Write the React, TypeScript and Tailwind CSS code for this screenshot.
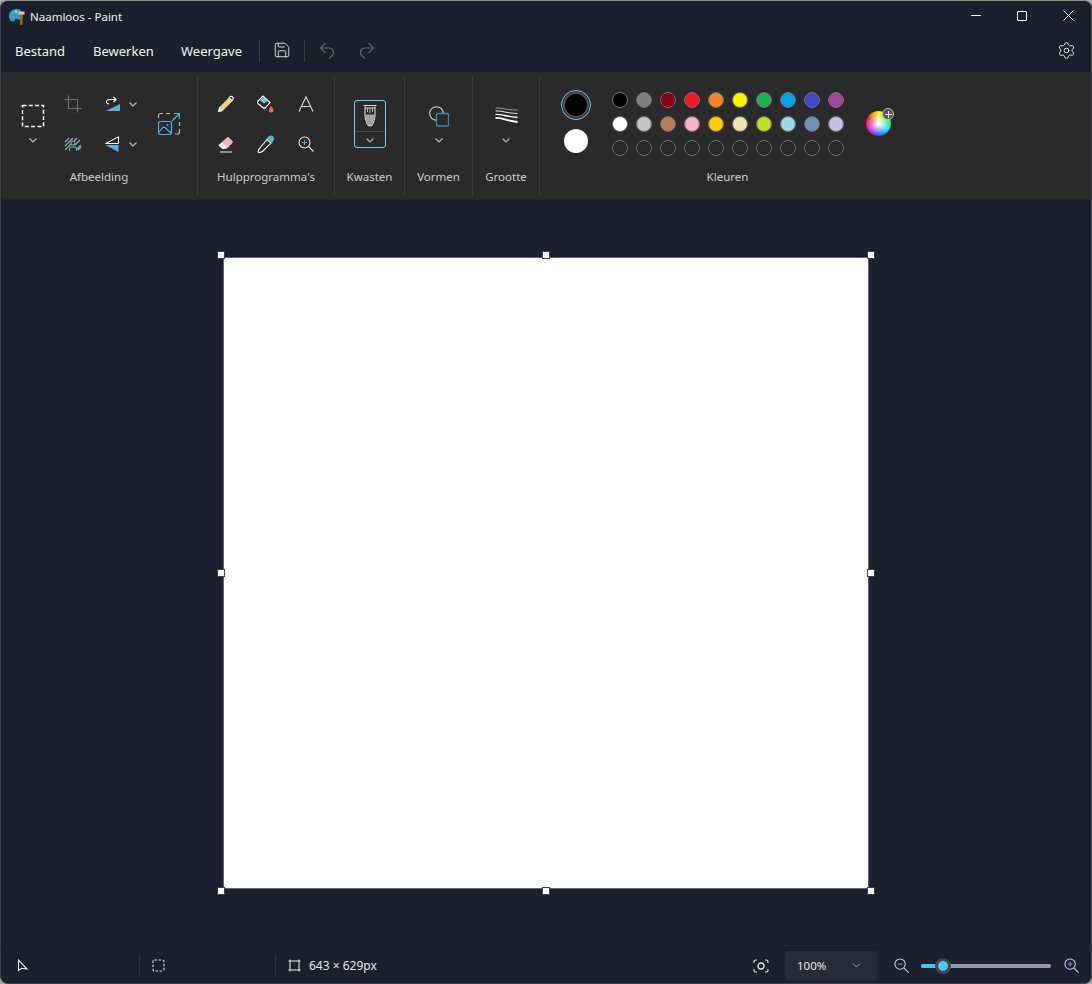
import { ChevronDown, Save, Settings } from "lucide-react";

const row1 = ["bg-[#000000]", "bg-[#7f7f7f]", "bg-[#880015]", "bg-[#ed1c24]", "bg-[#ff7f27]", "bg-[#fff200]", "bg-[#22b14c]", "bg-[#00a2e8]", "bg-[#3f48cc]", "bg-[#a349a4]"];
const row2 = ["bg-[#ffffff]", "bg-[#c3c3c3]", "bg-[#b97a57]", "bg-[#ffaec9]", "bg-[#ffc90e]", "bg-[#efe4b0]", "bg-[#b5e61d]", "bg-[#99d9ea]", "bg-[#7092be]", "bg-[#c8bfe7]"];
const row3 = Array.from({ length: 10 }, () => "bg-transparent");

const BLUE = "#4fb3e3";

function Chevron() {
  return (
    <svg width="10" height="10" viewBox="0 0 10 10" fill="none" stroke="#b4b4b4" strokeWidth="1.2">
      <path d="M1.5 3.5 5 7l3.5-3.5" />
    </svg>
  );
}

function Cell({ children, w = "w-10" }: { children: React.ReactNode; w?: string }) {
  return <div className={`${w} h-10 flex items-center justify-center shrink-0`}>{children}</div>;
}

function Group({ label, width, children }: { label: string; width: string; children: React.ReactNode }) {
  return (
    <div className={`${width} h-full shrink-0 flex flex-col border-r border-[#3c3c3c]`}>
      <div className="h-[88px] pt-2 flex">{children}</div>
      <div className="h-[26px] flex items-center justify-center text-[11.5px] text-[#cdcdcd]">{label}</div>
    </div>
  );
}

function Stacked({ icon, width = "w-full" }: { icon: React.ReactNode; width?: string }) {
  return (
    <div className={`${width} flex flex-col items-center pt-5`}>
      <div className="h-6 flex items-center justify-center">{icon}</div>
      <div className="mt-[7px]">
        <Chevron />
      </div>
    </div>
  );
}

function PaintLogo() {
  return (
    <svg width="16" height="17" viewBox="0 0 16 17">
      <path d="M7.500 1C3 1 0 4 0 8.500c0 3.500 2.500 5.500 4.500 5 1.500-.4 1-2.500 2.500-2.700 1.500-.2 3 2.200 5.500.2 2.500-2 2-10-5-10z" fill="#2a9be0" />
      <circle cx="3" cy="9" r="1.300" fill="#ef5b3c" />
      <circle cx="7" cy="3.500" r="1.300" fill="#ffd23f" />
      <circle cx="3.500" cy="5" r="1.300" fill="#35c2a0" />
      <path d="M11 6h2.500v11H11z" fill="#a85a28" />
      <path d="M9.500 3.500h6V6.500h-6z" fill="#eec48c" />
    </svg>
  );
}

function SelectIcon() {
  return (
    <svg width="24" height="24" viewBox="0 0 24 24" fill="none" stroke="#fff" strokeWidth="1.500">
      <rect x="1.500" y="1.500" width="21" height="21" strokeDasharray="4 2.300" />
    </svg>
  );
}

function CropIcon() {
  return (
    <svg width="18" height="18" viewBox="0 0 18 18" fill="none" stroke="#6f6f6f" strokeWidth="1.200">
      <path d="M4.500 0.500v13h13M0.500 4.500h13v13" />
    </svg>
  );
}

function RotateIcon() {
  return (
    <svg width="16" height="16" viewBox="0 0 16 16" fill="none">
      <path d="M2 15 16 8v7z" fill={BLUE} />
      <path d="M5 8C1.500 7.500 1.500 3.500 5.500 3.500H12M9.500 1 12 3.500 9.500 6" stroke="#fff" strokeWidth="1.100" />
    </svg>
  );
}

function FlipIcon() {
  return (
    <svg width="16" height="17" viewBox="0 0 16 17" fill="none">
      <path d="M1.500 7.500 14.500.8v6.700z" stroke="#fff" strokeWidth="1" />
      <path d="M1.500 9h13v7z" fill={BLUE} />
    </svg>
  );
}

function RemoveBgIcon() {
  return (
    <svg width="18" height="16" viewBox="0 0 18 16" fill="none">
      <path d="M1 6 5 2M1 10l8-8M1 14 13 2M6 14l2-2M11 9l5-5M12 14l5-5M14 14l3-3" stroke="#a8a8a8" strokeWidth="1.100" />
      <circle cx="9" cy="7" r="2" fill="#2a2a2a" stroke={BLUE} strokeWidth="1.100" />
      <path d="M5.500 15v-2a2 2 0 0 1 2-2h3a2 2 0 0 1 2 2v2" fill="#2a2a2a" stroke={BLUE} strokeWidth="1.100" />
    </svg>
  );
}

function ResizeIcon() {
  return (
    <svg width="24" height="24" viewBox="0 0 24 24" fill="none">
      <path d="M1.500 6V3.500a2 2 0 0 1 2-2H6M9 1.500h4M22.500 10v4M22.500 17v3a2 2 0 0 1-2 2H18" stroke="#b5b5b5" strokeWidth="1.200" />
      <rect x="1.500" y="9.500" width="13" height="13" rx="2" stroke={BLUE} strokeWidth="1.200" />
      <path d="M2 20l4-4.500a1.500 1.500 0 0 1 2 0L14 21" stroke={BLUE} strokeWidth="1.100" />
      <circle cx="10.500" cy="13" r="0.900" fill={BLUE} />
      <path d="M15 9l7-7M17 1.500h5.300v5.300" stroke={BLUE} strokeWidth="1.200" />
    </svg>
  );
}

function PencilIcon() {
  return (
    <svg width="18" height="18" viewBox="0 0 18 18" fill="none">
      <path d="M1 17l1-4.500L12.500 2l3.500 3.500L5.500 16z" fill="#f0d183" />
      <path d="M12.500 2c1-1 2-1 3 0s1 2 0 3" stroke="#fff" strokeWidth="1.100" fill="#2a2a2a" />
      <path d="M1 17l1-4.500L5.500 16z" fill="#fff" />
      <path d="M12 2.500 15.500 6" stroke="#fff" strokeWidth="1" />
    </svg>
  );
}

function FillIcon() {
  return (
    <svg width="18" height="18" viewBox="0 0 18 18" fill="none">
      <path d="M1 6 6 1l7 6.500-4.500 5a2 2 0 0 1-2.800 0L1.500 9a2 2 0 0 1-.5-3z" fill="#2a2a2a" stroke="#fff" strokeWidth="1.100" />
      <path d="M2.500 5.500 6.500 2l4 4-3.500 2.500z" fill={BLUE} />
      <path d="M4 4 8 8M6 2.500l4 4" stroke="#ffffff" strokeWidth="0.700" />
      <path d="M14 11c1.500 2 2.500 3 2.500 4.300a2.400 2.400 0 0 1-4.800 0c0-1.300 1-2.300 2.300-4.300z" fill="#ef6a3a" />
    </svg>
  );
}

function TextIcon() {
  return (
    <svg width="16" height="16" viewBox="0 0 16 16" fill="none" stroke="#d8d8d8" strokeWidth="1.100">
      <path d="M1 15.500 8 .8l7 14.700M3.500 10.500h9" />
    </svg>
  );
}

function EraserIcon() {
  return (
    <svg width="18" height="18" viewBox="0 0 18 18" fill="none">
      <path d="M6 14 1.500 10 10 2.500a1.500 1.500 0 0 1 2 0l3.500 3.500a1.500 1.500 0 0 1 0 2L9.500 14z" fill="#f6b5bb" />
      <path d="M5.500 14 1.500 10.500l3.500-3 4.500 4.500-2.500 2z" fill="#fff" />
      <path d="M3 17h12" stroke="#ededed" strokeWidth="1.100" />
    </svg>
  );
}

function PickerIcon() {
  return (
    <svg width="18" height="18" viewBox="0 0 18 18" fill="none">
      <path d="M10 4.500 14 8 6 16c-1 1-2 1-3.500 1.500L1 17c.5-1.500.5-2.500 1.500-3.500z" fill="#2a2a2a" stroke="#fff" strokeWidth="1.100" />
      <path d="M9.500 3.500l5.500 5 1-2.500c1.500-1 1.500-3.500 0-4.800s-3.500-1-4.500.5z" fill={BLUE} />
    </svg>
  );
}

function MagnifierIcon({ size = 16, stroke = "#e6e6e6", plus = BLUE, minus = false }: { size?: number; stroke?: string; plus?: string; minus?: boolean }) {
  return (
    <svg width={size} height={size} viewBox="0 0 16 16" fill="none">
      <circle cx="6.500" cy="6.500" r="5.500" stroke={stroke} strokeWidth="1.100" />
      <path d="M10.500 10.500 15.500 15.500" stroke={stroke} strokeWidth="1.100" />
      <path d={minus ? "M4 6.500h5" : "M4 6.500h5M6.500 4v5"} stroke={plus} strokeWidth="1.100" />
    </svg>
  );
}

function BrushIcon() {
  return (
    <svg width="14" height="24" viewBox="0 0 14 24" fill="none">
      <path d="M2 2.500v9c0 3 .8 5 2 8 .6 1.500 1.500 2.500 3 2.500s2.400-1 3-2.500c1.200-3 2-5 2-8v-9" fill="#2a2a2a" stroke="#d9d9d9" strokeWidth="1.100" />
      <path d="M2.500 10.500h9v1c0 3-.8 5-2 7.800-.6 1.300-1.200 2.200-2.500 2.200s-1.900-.9-2.500-2.200c-1.200-2.800-2-4.800-2-7.800z" fill="#a3a3a3" />
      <path d="M.5 1.500h13M2 4h10" stroke="#d9d9d9" strokeWidth="1" />
      <path d="M4.500 4v4M7 4v5M9.500 4v4" stroke="#d9d9d9" strokeWidth="0.800" />
    </svg>
  );
}

function ShapesIcon() {
  return (
    <svg width="20" height="21" viewBox="0 0 20 21" fill="none">
      <circle cx="7.500" cy="7.500" r="6.800" stroke="#d4d4d4" strokeWidth="1.100" />
      <rect x="7.500" y="7.500" width="12" height="12.500" rx="1.500" fill="#2a2a2a" stroke="#3f87ab" strokeWidth="1.300" />
    </svg>
  );
}

function SizeIcon() {
  return (
    <svg width="23" height="18" viewBox="0 0 23 18" fill="none" stroke="#fff">
      <path d="M0.500 1c6-.5 10 2 22 2" strokeWidth="0.500" />
      <path d="M0.500 4c6-.5 10 2 22 2.500" strokeWidth="0.900" />
      <path d="M0.500 7.500c6-.5 10 2 22 3" strokeWidth="1.300" />
      <path d="M0.500 11c6-.5 10 2.500 22 4" strokeWidth="1.800" />
    </svg>
  );
}

function CursorIcon() {
  return (
    <svg width="11" height="13" viewBox="0 0 11 13" fill="none" stroke="#e6e6e6" strokeWidth="1.100">
      <path d="M1.500 1v10.500l3.300-2.200 5.200.7z" />
    </svg>
  );
}

function Handle({ className }: { className: string }) {
  return <div className={`absolute w-[6px] h-[6px] bg-white outline outline-1 outline-[#3b4250] ${className}`} />;
}

export default function App() {
  return (
    <div className="w-[1092px] h-[984px] bg-[#a8a8a8] overflow-hidden font-['Noto_Sans',sans-serif]">
      <div className="w-full h-full flex flex-col rounded-[8px] overflow-hidden border border-[#3f444c] border-t-[#8f8f8f] bg-[#1a202e] text-white">
        {/* title bar */}
        <div className="h-[31px] shrink-0 bg-[#1a212c] flex items-center pl-[8px]">
          <PaintLogo />
          <span className="ml-[5px] text-[11.5px] text-[#f0f0f0]">Naamloos - Paint</span>
          <div className="ml-auto flex items-center pb-[2px]">
            <div className="w-[46px] h-[29px] flex items-center justify-center">
              <div className="w-[10px] h-px bg-white" />
            </div>
            <div className="w-[46px] h-[29px] flex items-center justify-center">
              <div className="w-[10px] h-[10px] border border-white rounded-[1px]" />
            </div>
            <div className="w-[46px] h-[29px] flex items-center justify-center">
              <svg width="11" height="11" viewBox="0 0 11 11" fill="none" stroke="#fff" strokeWidth="1">
                <path d="M.5.500l10 10M10.500.500l-10 10" />
              </svg>
            </div>
          </div>
        </div>

        {/* menu bar */}
        <div className="h-[40px] shrink-0 bg-[#1a212c] flex items-center text-[13px] text-[#f2f2f2] pl-[14px] pr-[15px]">
          <span className="w-[78px]">Bestand</span>
          <span className="w-[88px]">Bewerken</span>
          <span className="w-[78px]">Weergave</span>
          <div className="w-px h-[22px] mb-[2px] bg-[#3a4048]" />
          <div className="w-[44px] flex justify-center mb-[4px]">
            <Save size={18} strokeWidth={1.200} className="text-[#ececec]" />
          </div>
          <div className="w-px h-[22px] mb-[2px] bg-[#3a4048]" />
          <div className="w-[44px] flex justify-center mb-[4px]">
            <svg width="16" height="17" viewBox="0 0 16 17" fill="none" stroke="#5f656c" strokeWidth="1.200">
              <path d="M6.500 1 1.500 6l5 5M1.500 6H10a4.500 4.500 0 0 1 2.800 8L10 16.500" />
            </svg>
          </div>
          <div className="w-[36px] flex justify-center mb-[4px]">
            <svg width="16" height="17" viewBox="0 0 16 17" fill="none" stroke="#5f656c" strokeWidth="1.200">
              <path d="M9.500 1l5 5-5 5M14.500 6H6a4.500 4.500 0 0 0-2.800 8L6 16.500" />
            </svg>
          </div>
          <Settings size={19} strokeWidth={1.200} className="ml-auto mb-[4px] text-[#ececec]" />
        </div>

        {/* ribbon */}
        <div className="h-[128px] shrink-0 bg-[#2a2a2a] flex py-[4px] border-b border-[#242424]">
          <Group label="Afbeelding" width="w-[197px]">
            <div className="w-[12px]" />
            <Stacked width="w-10" icon={<SelectIcon />} />
            <div className="flex flex-col">
              <Cell><CropIcon /></Cell>
              <Cell><RemoveBgIcon /></Cell>
            </div>
            <div className="flex flex-col">
              <div className="flex items-center h-10 w-[56px]">
                <Cell w="w-[38px]"><RotateIcon /></Cell>
                <div className="ml-[-3px]"><Chevron /></div>
              </div>
              <div className="flex items-center h-10 w-[56px]">
                <Cell w="w-[38px]"><FlipIcon /></Cell>
                <div className="ml-[-3px]"><Chevron /></div>
              </div>
            </div>
            <div className="flex items-center h-[80px] w-[40px] pl-[8px]">
              <ResizeIcon />
            </div>
          </Group>

          <Group label="Hulpprogramma's" width="w-[137px]">
            <div className="pl-[8px] grid grid-cols-3 h-[80px]">
              <Cell><PencilIcon /></Cell>
              <Cell><FillIcon /></Cell>
              <Cell><TextIcon /></Cell>
              <Cell><EraserIcon /></Cell>
              <Cell><PickerIcon /></Cell>
              <Cell><MagnifierIcon /></Cell>
            </div>
          </Group>

          <Group label="Kwasten" width="w-[70px]">
            <div className="w-full flex justify-center pt-[16px]">
              <div className="w-[32px] h-[48px] border border-[#6fcfe3] rounded-[3px] flex flex-col items-center">
                <div className="h-[31px] w-full flex items-center justify-center border-b border-[#444]">
                  <BrushIcon />
                </div>
                <div className="flex-1 flex items-center">
                  <Chevron />
                </div>
              </div>
            </div>
          </Group>

          <Group label="Vormen" width="w-[68px]">
            <Stacked icon={<ShapesIcon />} />
          </Group>

          <Group label="Grootte" width="w-[67px]">
            <Stacked icon={<SizeIcon />} />
          </Group>

          <div className="flex-1 h-full flex flex-col">
            <div className="h-[88px] flex">
              <div className="w-[72px] flex flex-col items-center pt-[14px]">
                <div className="w-[30px] h-[30px] rounded-full border border-[#6fcfe3] flex items-center justify-center">
                  <div className="w-[26px] h-[26px] rounded-full bg-black border-2 border-[#4b4b4b]" />
                </div>
                <div className="mt-[9px] w-6 h-6 rounded-full bg-white" />
              </div>
              <div className="pt-[16px] flex flex-col gap-[8px] h-full">
                {[row1, row2, row3].map((row, i) => (
                  <div key={i} className="flex gap-[8px]">
                    {row.map((c, j) => (
                      <div key={j} className={`w-4 h-4 rounded-full border border-[#6d6d6d] ${c}`} />
                    ))}
                  </div>
                ))}
              </div>
              <div className="ml-[22px] mt-[35px] relative w-[25px] h-[25px] rounded-full bg-[radial-gradient(circle,#ffffff_5%,transparent_70%),conic-gradient(#ffee00,#33ee33,#00ddee,#2244ff,#ee00cc,#ff2222,#ffee00)]">
                <div className="absolute -top-[3px] -right-[3px] w-[12px] h-[12px] rounded-full bg-[#555] border border-[#bbb] flex items-center justify-center">
                  <div className="relative w-[7px] h-[7px]">
                    <div className="absolute left-[3px] top-0 w-px h-[7px] bg-[#ddd]" />
                    <div className="absolute left-0 top-[3px] w-[7px] h-px bg-[#ddd]" />
                  </div>
                </div>
              </div>
            </div>
            <div className="h-[26px] w-[375px] flex items-center justify-center text-[11.5px] text-[#cdcdcd]">Kleuren</div>
          </div>
        </div>

        {/* canvas */}
        <div className="flex-1 pl-[223px] pt-[58px] bg-[#1a202e]">
          <div className="relative w-[644px] h-[630px] bg-white outline outline-1 outline-[#5b6270]">
            <Handle className="-left-[6px] -top-[6px]" />
            <Handle className="left-1/2 -translate-x-1/2 -top-[6px]" />
            <Handle className="-right-[6px] -top-[6px]" />
            <Handle className="-left-[6px] top-1/2 -translate-y-1/2" />
            <Handle className="-right-[6px] top-1/2 -translate-y-1/2" />
            <Handle className="-left-[6px] -bottom-[6px]" />
            <Handle className="left-1/2 -translate-x-1/2 -bottom-[6px]" />
            <Handle className="-right-[6px] -bottom-[6px]" />
          </div>
        </div>

        {/* status bar */}
        <div className="h-[38px] shrink-0 bg-[#1a202e] border-t border-[#20262f] pt-[2px] flex items-center text-[12px] text-[#e6e6e6]">
          <div className="w-[139px] h-[22px] pl-[16px] flex items-center border-r border-[#2e343f]">
            <CursorIcon />
          </div>
          <div className="w-[136px] h-[22px] pl-[12px] flex items-center border-r border-[#2e343f]">
            <svg width="13" height="13" viewBox="0 0 13 13" fill="none" stroke="#e0e0e0" strokeWidth="1.100">
              <rect x="1" y="1" width="11" height="11" rx="1.500" strokeDasharray="2.500 1.600" />
            </svg>
          </div>
          <div className="pl-[12px] flex items-center">
            <svg width="13" height="13" viewBox="0 0 13 13" fill="none" stroke="#e6e6e6" strokeWidth="1.100">
              <path d="M2 .5v12M11 .5v12M.5 2h12M.5 11h12" />
            </svg>
            <span className="ml-[8px]">643 × 629px</span>
          </div>
          <div className="ml-auto flex items-center">
            <svg width="16" height="14" viewBox="0 0 16 14" fill="none" stroke="#e6e6e6" strokeWidth="1.100">
              <path d="M4 1H2.500A1.500 1.500 0 0 0 1 2.500V4M12 1h1.500A1.500 1.500 0 0 1 15 2.500V4M4 13H2.500A1.500 1.500 0 0 1 1 11.500V10M12 13h1.500a1.500 1.500 0 0 0 1.500-1.500V10" />
              <circle cx="8" cy="7" r="3" strokeWidth="1.300" />
            </svg>
            <div className="ml-[16px] w-[92px] h-[29px] rounded-[4px] bg-[#252b38] flex items-center pl-[12px] pr-[14px] justify-between text-[11.5px]">
              <span>100%</span>
              <ChevronDown size={13} strokeWidth={1.200} className="text-[#d6d6d6]" />
            </div>
            <div className="ml-[17px]">
              <MagnifierIcon size={15} stroke="#d8d8d8" minus />
            </div>
            <div className="ml-[12px] relative w-[130px] h-[4px] rounded-full bg-[#9a9a9f]">
              <div className="h-full w-[22px] rounded-full bg-[#4cc2ff]" />
              <div className="absolute left-[14px] -top-[6px] w-4 h-4 rounded-full bg-[#4cc2ff] border-[3px] border-[#454545]" />
            </div>
            <div className="ml-[13px] mr-[12px]">
              <MagnifierIcon size={15} stroke="#d8d8d8" />
            </div>
          </div>
        </div>
      </div>
    </div>
  );
}
